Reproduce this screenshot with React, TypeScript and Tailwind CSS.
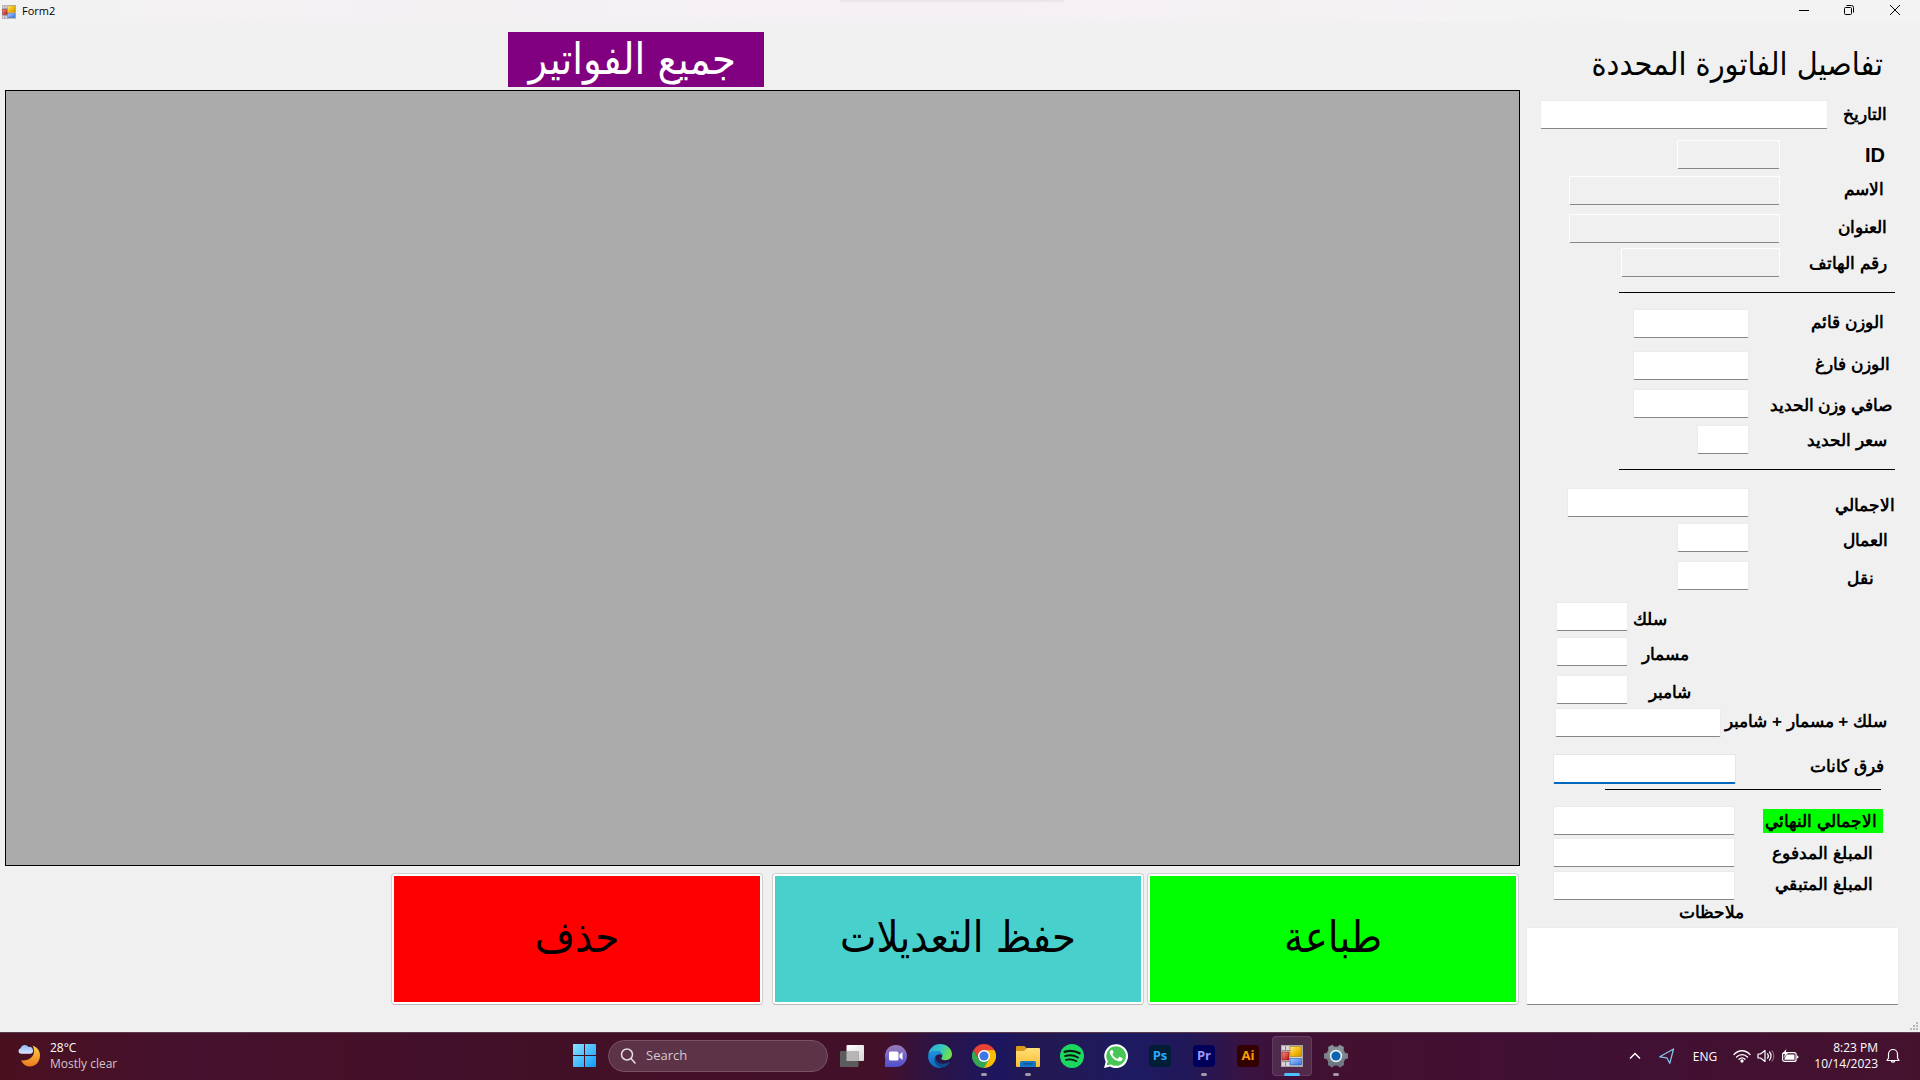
import React from "react";

type RowData = {
  id: string;
  label: string;
  row: string;
  labelClass: string;
  inputClass: string;
  disabled?: boolean;
  focused?: boolean;
};

const customerRows: RowData[] = [
  { id: "date", label: "التاريخ", row: "mt-0", labelClass: "w-[92px] ps-[33px]", inputClass: "w-[288px]" },
  { id: "invoice-id", label: "ID", row: "mt-2.5", labelClass: "w-[140px] ps-[35px] text-xl", inputClass: "w-[103px]", disabled: true },
  { id: "name", label: "الاسم", row: "mt-1.5", labelClass: "w-[140px] ps-[36px] pb-0.5", inputClass: "w-[211px]", disabled: true },
  { id: "address", label: "العنوان", row: "mt-2", labelClass: "w-[140px] ps-[33px] pb-0.5", inputClass: "w-[211px]", disabled: true },
  { id: "phone", label: "رقم الهاتف", row: "mt-1", labelClass: "w-[140px] ps-[33px] pt-0.5", inputClass: "w-[159px]", disabled: true },
];

const weightRows: RowData[] = [
  { id: "gross", label: "الوزن قائم", row: "mt-4", labelClass: "w-[171px] ps-[36px] pb-0.5", inputClass: "w-[116px]" },
  { id: "tare", label: "الوزن فارغ", row: "mt-3", labelClass: "w-[171px] ps-[30px] pb-0.5", inputClass: "w-[116px]" },
  { id: "net", label: "صافي وزن الحديد", row: "mt-2", labelClass: "w-[171px] ps-[28px] pt-1", inputClass: "w-[116px]" },
  { id: "price", label: "سعر الحديد", row: "mt-1.5", labelClass: "w-[171px] ps-[33px] pt-0.5", inputClass: "w-[52px]" },
];

const costRows: RowData[] = [
  { id: "total", label: "الاجمالي", row: "mt-[18px]", labelClass: "w-[171px] ps-[25px] pt-1.5", inputClass: "w-[182px]" },
  { id: "workers", label: "العمال", row: "mt-[5px]", labelClass: "w-[171px] ps-[32px] pt-1.5", inputClass: "w-[72px]" },
  { id: "transport", label: "نقل", row: "mt-2", labelClass: "w-[171px] ps-[46px] pt-1.5", inputClass: "w-[72px]" },
  { id: "wire", label: "سلك", row: "mt-[11px]", labelClass: "w-[292px] ps-[253px] pt-1.5", inputClass: "w-[72px]" },
  { id: "nails", label: "مسمار", row: "mt-[5px]", labelClass: "w-[292px] ps-[231px] pt-1.5", inputClass: "w-[72px]" },
  { id: "chamber", label: "شامبر", row: "mt-2", labelClass: "w-[292px] ps-[229px] pt-1.5", inputClass: "w-[72px]" },
  { id: "extras", label: "سلك + مسمار + شامبر", row: "mt-[3px]", labelClass: "w-[199px] ps-[33px] pb-0.5", inputClass: "w-[166px]" },
  { id: "difference", label: "فرق كانات", row: "mt-4", labelClass: "w-[184px] ps-[36px] pb-1", inputClass: "w-[183px]", focused: true },
];

const finalRows: RowData[] = [
  { id: "grand-total", label: "الاجمالي النهائي", row: "mt-4", labelClass: "w-[185px] ps-[37px]", inputClass: "w-[182px]" },
  { id: "paid", label: "المبلغ المدفوع", row: "mt-0.5", labelClass: "w-[185px] ps-[47px] pt-0.5", inputClass: "w-[182px]" },
  { id: "remaining", label: "المبلغ المتبقي", row: "mt-[3px]", labelClass: "w-[185px] ps-[47px] pb-0.5", inputClass: "w-[182px]" },
];

function Field({ item }: { item: RowData }) {
  const look = item.focused
    ? "h-[30px] border border-b-2 border-[#e5e5e5] border-b-[#0067c0] bg-white"
    : item.disabled
      ? "h-[29px] border border-white border-b-[#868686] bg-[#f0f0f0]"
      : "h-[29px] border border-[#ebebeb] border-b-[#868686] bg-white";
  return (
    <div className={`flex h-[30px] items-start ${item.row}`}>
      <label htmlFor={item.id} className={`shrink-0 self-center whitespace-nowrap ${item.labelClass}`}>
        {item.id === "grand-total" ? (
          <span className="block h-6 w-[120px] bg-[#00ff00] ps-[6px] leading-[26px]">{item.label}</span>
        ) : (
          item.label
        )}
      </label>
      <input id={item.id} type="text" disabled={item.disabled} className={`rounded-[2px] px-1 outline-none ${look} ${item.inputClass}`} />
    </div>
  );
}

function FormIcon({ className }: { className: string }) {
  return (
    <svg viewBox="0 0 22 22" className={className} aria-hidden="true">
      <defs>
        <linearGradient id="fy" x1="0" y1="0" x2="1" y2="1"><stop offset="0" stopColor="#ffe98a" /><stop offset=".6" stopColor="#f0b400" /><stop offset="1" stopColor="#c98f00" /></linearGradient>
        <linearGradient id="fr" x1="0" y1="0" x2="1" y2="1"><stop offset="0" stopColor="#ff8a7a" /><stop offset="1" stopColor="#b01818" /></linearGradient>
        <linearGradient id="fb" x1="0" y1="0" x2="1" y2="1"><stop offset="0" stopColor="#a8ccff" /><stop offset="1" stopColor="#2f6fe0" /></linearGradient>
      </defs>
      <rect x=".5" y=".5" width="21" height="21" fill="#d9d5d8" stroke="#a9a5a9" />
      <path d="M1 5.500h8M1 16.500h8M4.500 16v5M4.500 1v5" stroke="#8f888e" strokeWidth="1" />
      <rect x="1" y="7" width="7" height="8" fill="url(#fr)" stroke="#8c1010" strokeWidth=".6" />
      <rect x="9" y="1.500" width="11.500" height="10" fill="url(#fy)" stroke="#a87800" strokeWidth=".6" />
      <rect x="9" y="13.500" width="11.500" height="6.500" fill="url(#fb)" stroke="#2a58a8" strokeWidth=".6" />
    </svg>
  );
}

function ActionButton({ fill, children }: { fill: string; children: React.ReactNode }) {
  return (
    <button type="button" className="h-[132px] w-[372px] rounded border border-[#d0d0d0] border-b-[#bababa] bg-white p-0.5 font-['DejaVu_Sans_Condensed','DejaVu_Sans',sans-serif] text-[43px]">
      <span className={`flex h-full items-center justify-center pb-1 ${fill}`}>{children}</span>
    </button>
  );
}

function TaskButton({ label, running, active, children }: { label: string; running?: boolean; active?: boolean; children: React.ReactNode }) {
  return (
    <button type="button" aria-label={label} className={`relative mx-0.5 flex h-10 w-10 items-center justify-center rounded ${active ? "border border-white/10 bg-white/10" : ""}`}>
      {children}
      {running && <span className="absolute bottom-0 h-[3px] w-1.5 rounded-full bg-[#a596a8]" />}
      {active && <span className="absolute -bottom-px h-[3px] w-4 rounded-full bg-[#4cc2ff]" />}
    </button>
  );
}

function Taskbar() {
  return (
    <footer className="flex h-12 items-center border-t border-[#5b3a4c] bg-[linear-gradient(90deg,#49101f_0%,#45112e_10%,#451028_18%,#43102c_22%,#421026_28%,#43102a_46%,#2a1448_49%,#1c1660_52%,#231850_54%,#1e1a62_59%,#221858_62%,#3a1240_65%,#43102f_70%,#401034_82%,#45122e_100%)] pb-0.5 text-white">
      <div className="flex flex-1 items-center ps-[18px]">
        <svg viewBox="0 0 24 24" className="h-6 w-6" aria-hidden="true">
          <defs>
            <linearGradient id="moon" x1="0" y1="0" x2="0" y2="1"><stop offset="0" stopColor="#fbd04a" /><stop offset="1" stopColor="#ee7a1c" /></linearGradient>
            <linearGradient id="cloud" x1="0" y1="0" x2="0" y2="1"><stop offset="0" stopColor="#8fb6f5" /><stop offset="1" stopColor="#dbe8fd" /></linearGradient>
          </defs>
          <path d="M14.500 1.500c4.500 1.500 7.500 5 7.500 9.800C22 17.500 18 22.500 12 22.500c-4 0-7-2-9-6.300 7 1.200 13-3 13-9 0-2-.5-4-1.500-5.700z" fill="url(#moon)" />
          <path d="M3 9.800a2.800 2.800 0 01-.4-5.500A4.300 4.300 0 0110.500 3a3.400 3.400 0 012 6.800z" fill="url(#cloud)" />
        </svg>
        <p className="ps-2 font-['Open_Sans'] text-xs leading-4">
          <span className="block">28°C</span>
          <span className="block text-[#d3c5cc]">Mostly clear</span>
        </p>
      </div>

      <nav aria-label="Taskbar" className="flex items-center ps-0.5">
        <TaskButton label="Start">
          <svg viewBox="0 0 23 23" className="h-[23px] w-[23px]">
            <defs><linearGradient id="win" x1="0" y1="0" x2="1" y2="1"><stop offset="0" stopColor="#8be4ff" /><stop offset="1" stopColor="#0d9bff" /></linearGradient></defs>
            <path d="M0 .8Q0 0 .8 0H11v11H0zM12 0h10.200q.8 0 .8.8V11H12zM0 12h11v11H.8q-.8 0-.8-.8zM12 12h11v10.200q0 .8-.8.8H12z" fill="url(#win)" />
          </svg>
        </TaskButton>
        <label className="mx-0.5 flex h-8 w-[220px] items-center gap-2.5 rounded-full border border-[#7a5065] bg-[#5d3347] ps-[11px]">
          <svg viewBox="0 0 16 16" className="h-4 w-4 shrink-0" fill="none" stroke="#e6dde2" strokeWidth="1.500" aria-hidden="true"><circle cx="7" cy="6.500" r="5.500" /><path d="M11 10.500l4 4.500" strokeLinecap="round" /></svg>
          <input type="search" aria-label="Search" placeholder="Search" className="w-40 bg-transparent font-['Open_Sans'] text-[13px] outline-none placeholder:text-[#d6c8cf]" />
        </label>
        <TaskButton label="Task view">
          <svg viewBox="0 0 24 24" className="h-6 w-6">
            <defs><linearGradient id="tv" x1="0" y1="0" x2="1" y2="1"><stop offset="0" stopColor="#fff" /><stop offset="1" stopColor="#d8d8d8" /></linearGradient></defs>
            <rect x="6.500" y="1" width="17.500" height="16" rx="1" fill="url(#tv)" />
            <rect x="0" y="7" width="18.500" height="16" rx="1" fill="#5c5c5c" />
            <path d="M6.500 7h12v10h-12z" fill="#b9b5b7" />
          </svg>
        </TaskButton>
        <TaskButton label="Chat">
          <svg viewBox="0 0 24 24" className="h-6 w-6">
            <defs><linearGradient id="chat" x1="0" y1="0" x2="0" y2="1"><stop offset="0" stopColor="#9a7bb8" /><stop offset="1" stopColor="#4f4fd0" /></linearGradient></defs>
            <path d="M12 1a11 11 0 110 22H1.500q-.7 0-.6-.7L1.300 15A11 11 0 0112 1z" fill="url(#chat)" />
            <rect x="5" y="7.500" width="9.500" height="9" rx="1.500" fill="#fff" /><path d="M15.500 10.500l3-2.500v8l-3-2.500z" fill="#fff" />
          </svg>
        </TaskButton>
        <TaskButton label="Edge">
          <svg viewBox="0 0 24 24" className="h-6 w-6">
            <defs>
              <linearGradient id="e1" x1="0" y1="0" x2="1" y2=".3"><stop offset="0" stopColor="#2aa6e8" /><stop offset=".6" stopColor="#35c8c0" /><stop offset="1" stopColor="#6fe04a" /></linearGradient>
              <linearGradient id="e2" x1="0" y1="0" x2="0" y2="1"><stop offset="0" stopColor="#1c94e0" /><stop offset="1" stopColor="#0f66bc" /></linearGradient>
            </defs>
            <path d="M.2 11C1 4.500 6 0 12 0c7 0 12 5 12 10 0 4-3 6.200-6.500 6.200-3 0-4.500-1-4.200-2 .9-1 1.200-2 1-3.200-.4-2.300-2.700-4-5.800-4C5 7 1.500 8.500.2 11z" fill="url(#e1)" />
            <path d="M.1 12.500C.1 9 4 7 8 7c3.600 0 6 2 6.300 4.300-1.600-1.800-6-1.300-7.300 2.200-1.500 4 2 9 7 9.800-.7.400-1.500.7-2.500.7C5 24 0 18.500.1 12.500z" fill="url(#e2)" />
            <path d="M8.300 11.800C6 18 13 22.500 22.500 17.500 20.500 21 17.500 23.300 14 23.500 8 22.500 4.500 16 8.300 11.800z" fill="#0c4a8c" />
          </svg>
        </TaskButton>
        <TaskButton label="Chrome" running>
          <svg viewBox="0 0 24 24" className="h-6 w-6">
            <path d="M12 12L1.600 6A12 12 0 0122.400 6z" fill="#ea4335" />
            <path d="M12 12V6h10.400A12 12 0 0112 24z" fill="#fbbc05" />
            <path d="M1.600 6A12 12 0 0012 24l5.200-9L12 12l-5.200 3z" fill="#34a853" />
            <path d="M1.600 6h20.800L12 6.500 6.800 15z" fill="#ea4335" />
            <circle cx="12" cy="12" r="6" fill="#fff" /><circle cx="12" cy="12" r="4.600" fill="#3b78e7" />
          </svg>
        </TaskButton>
        <TaskButton label="File Explorer" running>
          <svg viewBox="0 0 24 24" className="h-6 w-6">
            <defs><linearGradient id="fold" x1="0" y1="0" x2="0" y2="1"><stop offset="0" stopColor="#ffe07a" /><stop offset="1" stopColor="#f9bd30" /></linearGradient></defs>
            <path d="M0 3q0-1 1-1h7q.8 0 1.300.7L10.500 4v4H0z" fill="#d99a17" />
            <path d="M0 7h8l3-3h12q1 0 1 1v17q0 1-1 1H1q-1 0-1-1z" fill="url(#fold)" />
            <path d="M4 23v-4.500Q4 17 5.500 17h13q1.500 0 1.500 1.500V23z" fill="#1577c8" /><path d="M7.500 19.800h9" stroke="#0a4f92" strokeWidth="1.200" strokeLinecap="round" />
          </svg>
        </TaskButton>
        <TaskButton label="Spotify">
          <svg viewBox="0 0 24 24" className="h-6 w-6" fill="none" stroke="#0b1a10" strokeLinecap="round">
            <circle cx="12" cy="12" r="12" fill="#1ed760" stroke="none" />
            <path d="M4.600 7.800c5-1.400 10.500-1 15 1.500" strokeWidth="2.300" /><path d="M5.200 12c4.300-1.200 9-.7 12.800 1.500" strokeWidth="2" /><path d="M5.800 15.900c3.700-1 7.500-.5 10.700 1.300" strokeWidth="1.600" />
          </svg>
        </TaskButton>
        <TaskButton label="WhatsApp">
          <svg viewBox="0 0 24 24" className="h-6 w-6">
            <path d="M0 24l1.700-6.200A11.900 11.900 0 1112 24c-2 0-4-.5-5.700-1.500z" fill="#fff" />
            <path d="M2.700 21.300l1.100-4.100A9.800 9.800 0 1112 21.800c-1.800 0-3.400-.5-4.900-1.400z" fill="#49c456" />
            <path d="M8.700 6.500c-.3-.6-.5-.6-.9-.6-.9 0-2 1-2 2.600 0 1.500 1.100 3 1.300 3.200.2.200 2.200 3.500 5.400 4.700 2.700 1 3.200.8 3.800.8.600-.1 1.900-.8 2.100-1.500.3-.8.300-1.400.2-1.500l-2.600-1.300c-.4-.1-.6-.2-.9.200l-1.200 1.500c-.2.200-.4.300-.8.100-2.200-1-3.600-2.500-4.600-4.300 0-.6 1-1.300 1.100-2z" fill="#fff" />
          </svg>
        </TaskButton>
        <TaskButton label="Photoshop"><span className="h-[22px] w-[22px] rounded bg-[#001e36] text-center font-['Open_Sans'] text-[13px] font-bold leading-5 text-[#31a8ff]">Ps</span></TaskButton>
        <TaskButton label="Premiere Pro" running><span className="h-[22px] w-[22px] rounded bg-[#00005b] text-center font-['Open_Sans'] text-[13px] font-bold leading-5 text-[#9999ff]">Pr</span></TaskButton>
        <TaskButton label="Illustrator"><span className="h-[22px] w-[22px] rounded bg-[#330000] text-center font-['Open_Sans'] text-[13px] font-bold leading-5 text-[#ff9a00]">Ai</span></TaskButton>
        <TaskButton label="Form2" active><FormIcon className="h-[22px] w-[22px]" /></TaskButton>
        <TaskButton label="Settings" running>
          <svg viewBox="0 0 24 24" className="h-6 w-6">
            <defs><linearGradient id="gear" x1="0" y1="0" x2="0" y2="1"><stop offset="0" stopColor="#8f989f" /><stop offset="1" stopColor="#66717a" /></linearGradient></defs>
            <path d="M8.500 1l1.200 2h4.600l1.200-2 4.200 2.300-.6 2.600 1.800 3.300 3 .8v4l-3 .8-1.800 3.300.6 2.600-4.200 2.300-1.200-2H9.700l-1.200 2-4.200-2.300.6-2.600-1.800-3.300-3-.8v-4l3-.8 1.800-3.300-.6-2.600z" fill="url(#gear)" stroke="#79838b" strokeLinejoin="round" />
            <circle cx="12" cy="12" r="6.200" fill="#e9eef2" /><circle cx="12" cy="12" r="4.600" fill="#0b64ad" />
          </svg>
        </TaskButton>
      </nav>

      <div className="flex flex-1 items-center justify-end pe-5">
        <svg viewBox="0 0 12 8" className="h-2 w-3" fill="none" stroke="#fff" strokeWidth="1.500" aria-hidden="true"><path d="M1 6.500l5-5 5 5" /></svg>
        <svg viewBox="0 0 16 16" className="ms-[18px] h-4 w-4" fill="none" stroke="#7fc4e8" strokeWidth="1.300" strokeLinejoin="round" aria-hidden="true"><path d="M14.500 1L.8 8.800l7 1 3 5.500z" /></svg>
        <span className="ms-[18px] pt-0.5 font-['Open_Sans'] text-xs">ENG</span>
        <svg viewBox="0 0 18 14" className="ms-4 h-3.5 w-[18px]" fill="none" stroke="#fff" strokeWidth="1.300" strokeLinecap="round" aria-hidden="true"><path d="M1 5.500C5.500.5 12.500.5 17 5.500M3.500 8c3.200-3.300 7.800-3.300 11 0M6 10.300c1.800-1.700 4.200-1.700 6 0" /><circle cx="9" cy="12" r="1" fill="#fff" /></svg>
        <svg viewBox="0 0 18 14" className="ms-1.5 h-3.5 w-[18px]" fill="none" stroke="#fff" strokeWidth="1.200" strokeLinejoin="round" strokeLinecap="round" aria-hidden="true"><path d="M1 5h2.500L8 1.500v11L3.500 9H1z" /><path d="M10.500 4.800c1 1.200 1 3.200 0 4.400M12.500 3c2 2.200 2 5.800 0 8" /><path d="M15 1.800c2.400 3 2.400 7.400 0 10.400" stroke="#8a6a80" /></svg>
        <svg viewBox="0 0 18 14" className="ms-1.5 h-3.5 w-[18px]" aria-hidden="true"><rect x="1.600" y="3.600" width="13.500" height="8.800" rx="2" fill="none" stroke="#fff" strokeWidth="1.200" /><path d="M6 5.500h7.500v5.200H3.500V9zM16 6.500q1.500.3 1.500 1.500T16 9.500z" fill="#fff" /><path d="M5.500 0L1 5h3L2.500 9 7 4H4.500z" fill="#fff" /></svg>
        <time dateTime="2023-10-14T20:23" className="ms-[15px] text-end font-['Open_Sans'] text-xs leading-4">
          <span className="block">8:23 PM</span>
          <span className="block">10/14/2023</span>
        </time>
        <svg viewBox="0 0 14 16" className="ms-2 h-4 w-3.5" fill="none" stroke="#fff" strokeWidth="1.200" strokeLinejoin="round" aria-hidden="true"><path d="M2.500 6a4.500 4.500 0 019 0v4l1.500 2.500H1L2.500 10zM5.300 13a1.800 1.800 0 003.400 0" /></svg>
      </div>
    </footer>
  );
}

export default function App() {
  return (
    <div className="flex min-h-screen flex-col bg-[#f0f0f0] font-['Liberation_Sans',sans-serif] text-black">
      <header className="flex h-[23px] items-center bg-[linear-gradient(90deg,#f3f2f3,#f5f0f4_50%,#f3f3f3_90%)]">
        <div className="flex flex-1 items-center gap-1.5 ps-0.5">
          <FormIcon className="h-3.5 w-3.5" />
          <h1 className="font-['Open_Sans'] text-[11px]">Form2</h1>
        </div>
        <div className="h-[3px] w-[224px] self-start rounded-b bg-[linear-gradient(#e6e1e6,transparent)]" />
        <div className="flex flex-1 items-center justify-end pe-[19px] pb-[3px]">
          <button type="button" aria-label="Minimize" className="me-[33px]"><svg viewBox="0 0 12 12" className="h-3 w-3"><path d="M1 6.500h10" stroke="#000" /></svg></button>
          <button type="button" aria-label="Restore" className="me-[34px]"><svg viewBox="0 0 12 12" className="h-3 w-3" fill="none" stroke="#000"><rect x="1.500" y="3.500" width="7" height="7" rx="1" /><path d="M3.500 1.500h5q2 0 2 2v5" /></svg></button>
          <button type="button" aria-label="Close"><svg viewBox="0 0 12 12" className="h-3 w-3"><path d="M1 1l10 10M11 1L1 11" stroke="#000" /></svg></button>
        </div>
      </header>

      <div className="flex flex-1">
        <main dir="rtl" className="flex flex-1 flex-col pe-[5px] pt-[9px]">
          <h2 className="ms-[756px] h-[55px] w-[256px] bg-[#800080] ps-7 font-['DejaVu_Sans_Condensed','DejaVu_Sans',sans-serif] text-[43px] leading-[55px] whitespace-nowrap text-white">جميع الفواتير</h2>
          <section aria-label="جميع الفواتير" className="mt-[3px] flex-1 border border-black bg-[#ababab]" />
          <div className="mt-[7px] mb-[27px] flex gap-[3px] ps-px">
            <ActionButton fill="bg-[#00ff00]">طباعة</ActionButton>
            <ActionButton fill="bg-[#48d1cc]">حفظ التعديلات</ActionButton>
            <div className="ms-1.5 flex"><ActionButton fill="bg-[#ff0000]">حذف</ActionButton></div>
          </div>
        </main>

        <aside dir="rtl" className="flex w-[400px] shrink-0 flex-col text-[17px] leading-6 font-bold">
          <h2 className="h-[77px] pt-4 ps-[37px] font-['DejaVu_Sans_Condensed','DejaVu_Sans',sans-serif] text-[32px] leading-[50px] font-normal">تفاصيل الفاتورة المحددة</h2>
          {customerRows.map((r) => <Field key={r.id} item={r} />)}
          <hr className="ms-[25px] mt-3.5 w-[276px] border-black" />
          {weightRows.map((r) => <Field key={r.id} item={r} />)}
          <hr className="ms-[25px] mt-3.5 w-[276px] border-black" />
          {costRows.map((r) => <Field key={r.id} item={r} />)}
          <hr className="ms-[39px] mt-[5px] w-[276px] border-black" />
          {finalRows.map((r) => <Field key={r.id} item={r} />)}
          <label htmlFor="notes" className="ps-[176px]">ملاحظات</label>
          <textarea id="notes" className="ms-[21px] mt-0.5 h-[78px] w-[373px] resize-none rounded-[2px] border border-[#ebebeb] border-b-[#868686] bg-white outline-none" />
          <div dir="ltr" className="mt-auto flex justify-end pe-0.5 pb-0.5">
            <svg viewBox="0 0 8 8" className="h-2 w-2" fill="#b8b8b8" aria-hidden="true"><path d="M6 0h2v2H6zM3 3h2v2H3zM6 3h2v2H6zM0 6h2v2H0zM3 6h2v2H3zM6 6h2v2H6z" /></svg>
          </div>
        </aside>
      </div>
      <Taskbar />
    </div>
  );
}
